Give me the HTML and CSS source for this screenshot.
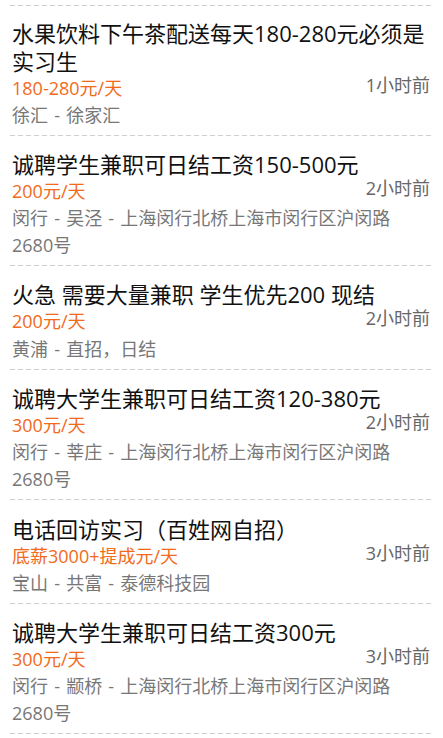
FILE: index.html
```html
<!DOCTYPE html>
<html lang="zh-CN">
<head>
<meta charset="UTF-8">
<meta name="viewport" content="width=device-width, initial-scale=1.0">
<title>兼职列表</title>
<link rel="stylesheet" href="styles.css">
</head>
<body>

<ul class="job-list">
  <li class="job">
    <div class="job-title">水果饮料下午茶配送每天180-280元必须是实习生</div>
    <div class="job-meta">
      <span class="job-pay">180-280元/天</span>
      <span class="job-time">1小时前</span>
    </div>
    <div class="job-place">徐汇 - 徐家汇</div>
  </li>
  <li class="job">
    <div class="job-title">诚聘学生兼职可日结工资150-500元</div>
    <div class="job-meta">
      <span class="job-pay">200元/天</span>
      <span class="job-time">2小时前</span>
    </div>
    <div class="job-place">闵行 - 吴泾 - 上海闵行北桥上海市闵行区沪闵路2680号</div>
  </li>
  <li class="job">
    <div class="job-title">火急 需要大量兼职 学生优先200 现结</div>
    <div class="job-meta">
      <span class="job-pay">200元/天</span>
      <span class="job-time">2小时前</span>
    </div>
    <div class="job-place">黄浦 - 直招<span class="punct">，</span>日结</div>
  </li>
  <li class="job">
    <div class="job-title">诚聘大学生兼职可日结工资120-380元</div>
    <div class="job-meta">
      <span class="job-pay">300元/天</span>
      <span class="job-time">2小时前</span>
    </div>
    <div class="job-place">闵行 - 莘庄 - 上海闵行北桥上海市闵行区沪闵路2680号</div>
  </li>
  <li class="job">
    <div class="job-title">电话回访实习<span class="punct">（</span>百姓网自招<span class="punct">）</span></div>
    <div class="job-meta">
      <span class="job-pay">底薪3000+提成元/天</span>
      <span class="job-time">3小时前</span>
    </div>
    <div class="job-place">宝山 - 共富 - 泰德科技园</div>
  </li>
  <li class="job">
    <div class="job-title">诚聘大学生兼职可日结工资300元</div>
    <div class="job-meta">
      <span class="job-pay">300元/天</span>
      <span class="job-time">3小时前</span>
    </div>
    <div class="job-place">闵行 - 颛桥 - 上海闵行北桥上海市闵行区沪闵路2680号</div>
  </li>
</ul>

</body>
</html>
```

FILE: styles.css
```css
/* Page */
body {
  margin: 0;
  background-color: #fff;
  font-family: "Open Sans", "Noto Sans CJK SC", sans-serif;
}

/* The list, with a dashed rule on top */
.job-list {
  list-style: none;
  margin: 0 11px 0 10px;
  padding: 5px 0 0 0;
  background-image: linear-gradient(to right, #cfcfcf 5px, transparent 5px);
  background-size: 8px 1px;
  background-repeat: repeat-x;
  background-position: left 5px;
}

/* One row, dashed rule under it */
.job {
  padding: 14px 2px 7px 2px;
  background-image: linear-gradient(to right, #cfcfcf 5px, transparent 5px);
  background-size: 8px 1px;
  background-repeat: repeat-x;
  background-position: left bottom;
}

.job-title {
  font-size: 22px;
  line-height: 28px;
  color: #111;
}

/* centred full-width punctuation */
.punct {
  font-family: "Noto Sans CJK TC", sans-serif;
}

/* Pay and time share a row */
.job-meta {
  display: flex;
  justify-content: space-between;
  align-items: flex-start;
}

.job-pay {
  font-size: 18px;
  line-height: 27px;
  color: #f26a1b;
}

.job-time {
  font-size: 18px;
  line-height: 21px;
  color: #666;
}

.job-place {
  font-size: 18px;
  line-height: 27px;
  word-spacing: 1.5px;
  color: #777;
}
```
